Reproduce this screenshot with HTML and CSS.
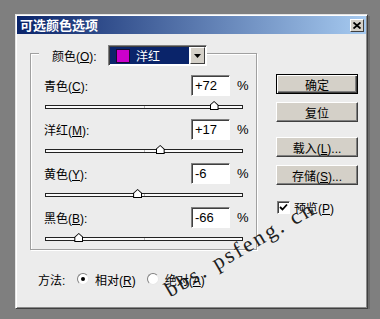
FILE: index.html
```html
<!DOCTYPE html>
<html lang="zh-CN">
<head>
    <meta charset="UTF-8">
    <title>可选颜色选项</title>
    <link rel="stylesheet" href="styles.css">
</head>
<body>
    <div class="dialog">
        <div class="titlebar">
            <span class="title">可选颜色选项</span>
            <span class="close-btn">
                <svg width="8" height="7" viewBox="0 0 8 7"><path d="M0.5 0.5 L7.5 6.5 M7.5 0.5 L0.5 6.5" stroke="#000" stroke-width="1.8"/></svg>
            </span>
        </div>

        <div class="content">
            <div class="main">
                <div class="group">
                    <div class="group-head">
                        <span class="head-label">颜色(<u>O</u>):</span>
                        <div class="select">
                            <div class="select-value"><span class="swatch"></span><span>洋红</span></div>
                            <div class="select-arrow">
                                <svg width="7" height="4" viewBox="0 0 7 4"><path d="M0 0 H7 L3.5 4 Z" fill="#000"/></svg>
                            </div>
                        </div>
                    </div>

                    <div class="channels">
                        <div class="channel-row">
                            <span class="channel-label">青色(<u>C</u>):</span>
                            <span class="num">+72</span>
                            <span class="pct">%</span>
                        </div>
                        <div class="slider"><div class="track"><span class="thumb" style="left: 86%"></span></div></div>

                        <div class="channel-row">
                            <span class="channel-label">洋红(<u>M</u>):</span>
                            <span class="num">+17</span>
                            <span class="pct">%</span>
                        </div>
                        <div class="slider"><div class="track"><span class="thumb" style="left: 58.5%"></span></div></div>

                        <div class="channel-row">
                            <span class="channel-label">黄色(<u>Y</u>):</span>
                            <span class="num">-6</span>
                            <span class="pct">%</span>
                        </div>
                        <div class="slider"><div class="track"><span class="thumb" style="left: 47%"></span></div></div>

                        <div class="channel-row">
                            <span class="channel-label">黑色(<u>B</u>):</span>
                            <span class="num">-66</span>
                            <span class="pct">%</span>
                        </div>
                        <div class="slider"><div class="track"><span class="thumb" style="left: 17%"></span></div></div>
                    </div>
                </div>

                <div class="method">
                    <span class="method-label">方法:</span>
                    <span class="radio-opt"><span class="radio checked"></span><span>相对(<u>R</u>)</span></span>
                    <span class="radio-opt"><span class="radio"></span><span>绝对(<u>A</u>)</span></span>
                </div>
            </div>

            <div class="side">
                <div class="btn default"><span>确定</span></div>
                <div class="btn gap-s"><span>复位</span></div>
                <div class="btn gap-l"><span>载入(<u>L</u>)...</span></div>
                <div class="btn gap-s"><span>存储(<u>S</u>)...</span></div>
                <div class="check-row">
                    <span class="checkbox">
                        <svg width="9" height="9" viewBox="0 0 9 9"><path d="M1 4 L3.5 6.5 L8 1.5" stroke="#000" stroke-width="1.8" fill="none"/></svg>
                    </span>
                    <span>预览(<u>P</u>)</span>
                </div>
            </div>
        </div>
    </div>

    <div class="watermark">bbs. psfeng. cn</div>
</body>
</html>
```

FILE: styles.css
```css
body {
    margin: 0;
    background: #7f7f7f;
    font-family: "Liberation Sans", "Noto Sans CJK SC", sans-serif;
    font-size: 12px;
    color: #000;
}

u {
    text-decoration: underline;
}

.dialog {
    box-sizing: border-box;
    width: 353px;
    height: 295px;
    margin: 14px 0 0 15px;
    padding: 1px;
    background: #ececec;
    border: 1px solid;
    border-color: #e4e4e4 #404040 #404040 #e4e4e4;
    box-shadow: inset 1px 1px 0 #fff, inset -1px -1px 0 #8a8a8a, 2px 2px 0 #6c6c6c;
}

.titlebar {
    display: flex;
    align-items: center;
    height: 18px;
    padding-left: 3px;
    background: linear-gradient(to right, #0a246a, #a6caf0);
}

.title {
    flex: 1;
    color: #fff;
    font-weight: bold;
    font-size: 13px;
    font-family: "Noto Sans CJK SC", sans-serif;
    line-height: 18px;
}

.close-btn {
    display: flex;
    align-items: center;
    justify-content: center;
    box-sizing: border-box;
    width: 14px;
    height: 13px;
    margin-right: 2px;
    background: #d4d0c8;
    border: 1px solid;
    border-color: #fff #404040 #404040 #fff;
}

.content {
    display: flex;
    padding: 19px 0 0 13px;
}

.group {
    box-sizing: border-box;
    width: 227px;
    height: 197px;
    padding: 0 12px 0 13px;
    border: 1px solid #a0a0a0;
    box-shadow: 1px 1px 0 #fff, inset 1px 1px 0 #fff;
}

.group-head {
    display: flex;
    align-items: center;
    width: fit-content;
    margin: -9px 0 0 -5px;
    padding-left: 13px;
    background: #ececec;
}

.head-label {
    width: 56px;
}

.select {
    display: flex;
    box-sizing: border-box;
    width: 99px;
    height: 21px;
    padding: 1px;
    background: #fff;
    border: 1px solid;
    border-color: #808080 #fff #fff #808080;
    box-shadow: inset 1px 1px 0 #404040;
}

.select-value {
    flex: 1;
    display: flex;
    align-items: center;
    gap: 6px;
    padding-left: 6px;
    background: #0a246a;
    color: #fff;
}

.swatch {
    box-sizing: border-box;
    width: 14px;
    height: 14px;
    background: #cc00cc;
    border: 1px solid #1a0a30;
}

.select-arrow {
    display: flex;
    align-items: center;
    justify-content: center;
    box-sizing: border-box;
    width: 15px;
    margin-left: 1px;
    background: #d4d0c8;
    border: 1px solid;
    border-color: #fff #404040 #404040 #fff;
}

.channels {
    margin-top: 9px;
}

.channel-row {
    display: flex;
    align-items: center;
    height: 21px;
}

.channel-label {
    flex: 1;
}

.num {
    box-sizing: border-box;
    width: 39px;
    height: 21px;
    padding: 2px 0 0 3px;
    background: #fff;
    border: 1px solid;
    border-color: #808080 #fff #fff #808080;
    box-shadow: inset 1px 1px 0 #404040;
    font-size: 13px;
    line-height: 16px;
}

.pct {
    width: 14px;
    padding-left: 7px;
    box-sizing: border-box;
    font-size: 13px;
}

.slider {
    height: 23px;
    padding: 9px 0 0 1px;
    box-sizing: border-box;
}

.track {
    position: relative;
    box-sizing: border-box;
    width: 198px;
    height: 4px;
    background: #fafafa;
    border: 1px solid #222;
}

.track::after {
    content: "";
    position: absolute;
    left: 50%;
    top: 0;
    width: 1px;
    height: 2px;
    background: #b8b8b8;
}

.thumb {
    position: absolute;
    top: -5px;
    width: 9px;
    height: 9px;
    margin-left: -5px;
    z-index: 1;
    background: #000;
    clip-path: polygon(50% 0, 100% 45%, 100% 100%, 0 100%, 0 45%);
}

.thumb::after {
    content: "";
    position: absolute;
    inset: 1px;
    background: #fff;
    clip-path: polygon(50% 0, 100% 45%, 100% 100%, 0 100%, 0 45%);
}

.method {
    display: flex;
    align-items: center;
    height: 16px;
    margin: 21px 0 0 8px;
}

.method-label {
    width: 39px;
}

.radio-opt {
    display: flex;
    align-items: center;
    gap: 6px;
    margin-right: 11px;
}

.radio {
    position: relative;
    box-sizing: border-box;
    width: 12px;
    height: 12px;
    border-radius: 50%;
    background: #fff;
    border: 1px solid;
    border-color: #808080 #e8e8e8 #e8e8e8 #808080;
}

.radio.checked::after {
    content: "";
    position: absolute;
    left: 3px;
    top: 3px;
    width: 4px;
    height: 4px;
    border-radius: 50%;
    background: #000;
}

.side {
    width: 82px;
    margin: 21px 0 0 19px;
}

.btn {
    display: flex;
    align-items: center;
    justify-content: center;
    box-sizing: border-box;
    height: 20px;
    background: #d4d0c8;
    border: 1px solid;
    border-color: #fff #404040 #404040 #fff;
    box-shadow: inset -1px -1px 0 #808080;
}

.btn.default {
    border: 1px solid #000;
    box-shadow: inset 1px 1px 0 #fff, inset -1px -1px 0 #404040, inset -2px -2px 0 #808080;
}

.gap-s {
    margin-top: 8px;
}

.gap-l {
    margin-top: 15px;
}

.check-row {
    display: flex;
    align-items: center;
    gap: 4px;
    margin: 14px 0 0 1px;
}

.checkbox {
    display: flex;
    align-items: center;
    justify-content: center;
    box-sizing: border-box;
    width: 13px;
    height: 13px;
    background: #fff;
    border: 1px solid;
    border-color: #808080 #fff #fff #808080;
    box-shadow: inset 1px 1px 0 #404040;
}

.watermark {
    position: absolute;
    left: 130px;
    top: 236px;
    width: 220px;
    height: 26px;
    line-height: 26px;
    text-align: center;
    font-family: "Liberation Serif", serif;
    font-size: 22px;
    letter-spacing: 2.5px;
    white-space: pre;
    color: #202020;
    transform: rotate(-30deg);
}
```
